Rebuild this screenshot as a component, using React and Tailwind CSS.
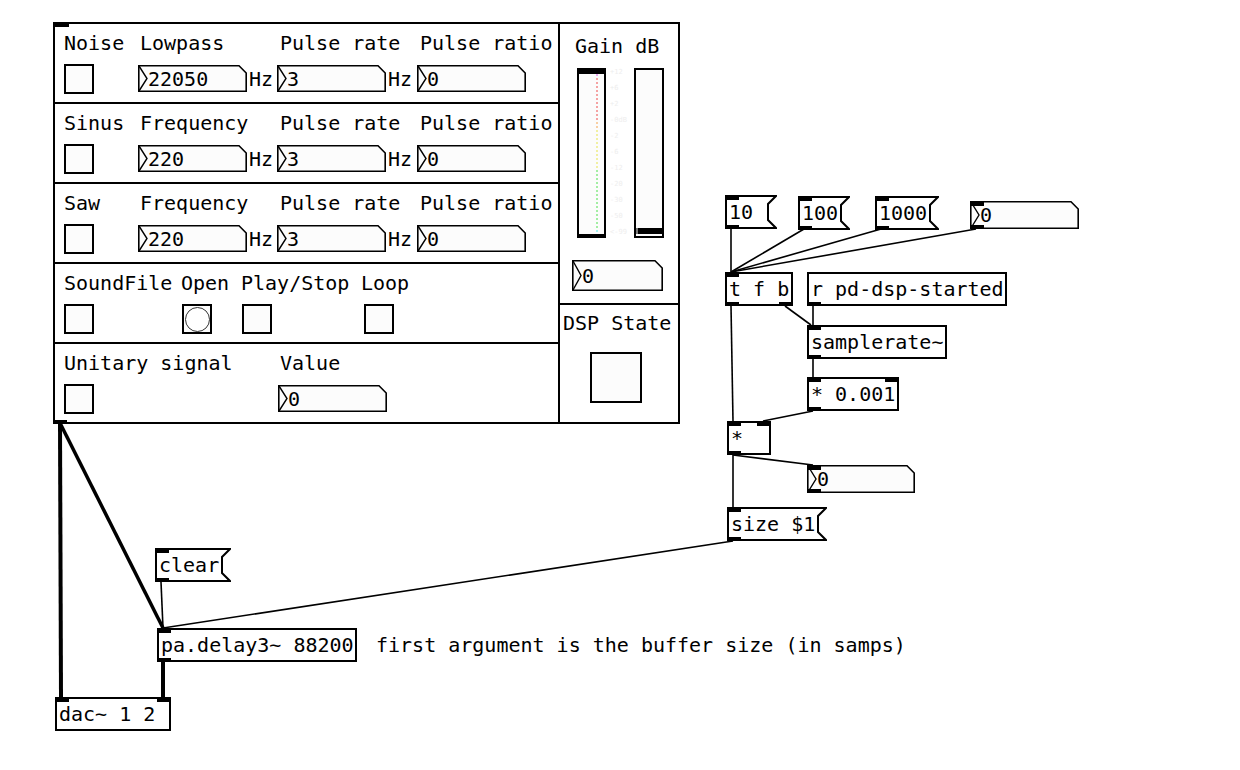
import React from "react";

// Pd-style patch canvas: nodes sit at their canvas coordinates, wires drawn in one svg.

const side = { l: "left-0", r: "right-0" };

function Ports({ ins = [], outs = [] }) {
  return (
    <>
      {ins.map((s, i) => (
        <span key={"i" + i} className={`absolute top-0 ${side[s]} h-[5px] w-[14px] bg-black`} />
      ))}
      {outs.map((s, i) => (
        <span key={"o" + i} className={`absolute bottom-0 ${side[s]} h-[4px] w-[14px] bg-black`} />
      ))}
    </>
  );
}

function Obj({ text, className, ins = [], outs = [] }) {
  return (
    <div
      className={`absolute flex h-[34px] items-center whitespace-pre bg-white pl-[4px] shadow-[inset_0_0_0_2px_#000] ${className}`}
    >
      {text}
      <Ports ins={ins} outs={outs} />
    </div>
  );
}

function Msg({ text, W, className }) {
  const H = 34;
  return (
    <div className={`absolute h-[34px] ${className}`}>
      <svg className="absolute inset-0" width={W} height={H}>
        <polygon
          points={`1,1 ${W - 1},1 ${W - 9},9 ${W - 9},${H - 9} ${W - 1},${H - 1} 1,${H - 1}`}
          fill="#fff"
          stroke="#000"
          strokeWidth="2"
        />
      </svg>
      <span className="relative flex h-full items-center whitespace-pre pl-[4px]">{text}</span>
      <Ports ins={["l"]} outs={["l"]} />
    </div>
  );
}

function NumBox({ w, h, value, className = "", ports = false }) {
  return (
    <div className={`relative shrink-0 ${className}`}>
      <svg className="absolute inset-0" width={w} height={h}>
        <polygon
          points={`0.8,0.8 ${w - 8},0.8 ${w - 0.8},8 ${w - 0.8},${h - 0.8} 0.8,${h - 0.8}`}
          fill="#fcfcfc"
          stroke="#000"
          strokeWidth="1.6"
        />
        <polyline points={`1,1 9,${h / 2} 1,${h - 1}`} fill="none" stroke="#000" strokeWidth="1.4" />
      </svg>
      <span className="relative flex h-full items-center pl-[10px]">{value}</span>
      {ports && <Ports ins={["l"]} outs={["l"]} />}
    </div>
  );
}

function Toggle({ className = "" }) {
  return <div className={`h-[30px] w-[30px] shrink-0 border-2 border-black bg-[#fcfcfc] ${className}`} />;
}

function Bang({ className = "" }) {
  return (
    <div
      className={`flex h-[30px] w-[30px] shrink-0 items-center justify-center border-2 border-black bg-[#fcfcfc] ${className}`}
    >
      <div className="h-[25px] w-[25px] rounded-full border-[1.5px] border-[#333] bg-white" />
    </div>
  );
}

function Hz() {
  return <span className="ml-[2px] mt-px flex h-[27px] w-[24px] shrink-0 items-center">Hz</span>;
}

function Row({ last, children }) {
  return (
    <div className={last ? "h-[78px] pl-[9px] pt-[9px]" : "h-[80px] border-b-2 border-black pl-[9px] pt-[9px]"}>
      {children}
    </div>
  );
}

function SynthRow({ name, param, value }) {
  return (
    <Row>
      <div className="flex whitespace-pre leading-[20px]">
        <span className="w-[76px] shrink-0">{name}</span>
        <span className="w-[140px] shrink-0">{param}</span>
        <span className="w-[140px] shrink-0">Pulse rate</span>
        <span>Pulse ratio</span>
      </div>
      <div className="mt-[11px] flex items-start">
        <Toggle />
        <NumBox className="ml-[44px] mt-px h-[27px] w-[109px]" w={109} h={27} value={value} />
        <Hz />
        <NumBox className="ml-[4px] mt-px h-[27px] w-[109px]" w={109} h={27} value="3" />
        <Hz />
        <NumBox className="ml-[5px] mt-px h-[27px] w-[109px]" w={109} h={27} value="0" />
      </div>
    </Row>
  );
}

const DOTS = [
  ...Array(1).fill("bg-[#e6a6f0]"),
  ...Array(11).fill("bg-[#f5a3a3]"),
  ...Array(2).fill("bg-[#f8cfa2]"),
  ...Array(10).fill("bg-[#f1f0a2]"),
  ...Array(15).fill("bg-[#a3eea3]"),
  ...Array(1).fill("bg-[#a3f2f2]"),
];

const SCALE = ["+12", "+6", "+2", "-0dB", "-2", "-6", "-12", "-20", "-30", "-50", "<-99"];

function GainPanel() {
  return (
    <div className="h-[281px] border-b-2 border-black">
      <div className="pl-[15px] pt-[12px] leading-[20px] whitespace-pre">Gain dB</div>
      <div className="ml-[17px] mt-[12px] flex">
        <div className="flex h-[170px] w-[29px] flex-col border-2 border-black bg-[#fcfcfc]">
          <div className="h-[4px] bg-black" />
          <div className="flex flex-col pl-[17px]">
            {DOTS.map((c, i) => (
              <span key={i} className={`mb-[2px] h-[2px] w-[2px] ${c}`} />
            ))}
          </div>
          <div className="h-[2px] bg-black" />
        </div>
        <div className="-mt-[4px] flex w-[28px] flex-col pl-[4px] text-[7px] text-[#eeeeee]">
          {SCALE.map((s) => (
            <span key={s} className="h-[16px] leading-[16px]">
              {s}
            </span>
          ))}
        </div>
        <div className="flex h-[170px] w-[30px] flex-col justify-end border-2 border-black bg-[#fcfcfc]">
          <div className="mb-[2px] flex h-[6px]">
            <span className="w-[2px] bg-[#777]" />
            <span className="flex-1 bg-black" />
          </div>
        </div>
      </div>
      <NumBox className="ml-[12px] mt-[20px] h-[31px] w-[91px]" w={91} h={31} value="0" />
    </div>
  );
}

function ControlPanel() {
  return (
    <div className="absolute left-[53px] top-[22px] flex h-[402px] w-[627px] border-2 border-black bg-white">
      <span className="absolute -left-[2px] -top-[2px] h-[5px] w-[16px] bg-black" />
      <span className="absolute -bottom-[2px] -left-[2px] h-[4px] w-[14px] bg-black" />
      <div className="flex w-[505px] shrink-0 flex-col border-r-2 border-black">
        <SynthRow name="Noise" param="Lowpass" value="22050" />
        <SynthRow name="Sinus" param="Frequency" value="220" />
        <SynthRow name="Saw" param="Frequency" value="220" />
        <Row>
          <div className="flex whitespace-pre leading-[20px]">
            <span className="w-[117px] shrink-0">SoundFile</span>
            <span className="w-[60px] shrink-0">Open</span>
            <span className="w-[120px] shrink-0">Play/Stop</span>
            <span>Loop</span>
          </div>
          <div className="mt-[11px] flex items-start">
            <Toggle />
            <Bang className="ml-[88px]" />
            <Toggle className="ml-[30px]" />
            <Toggle className="ml-[92px]" />
          </div>
        </Row>
        <Row last>
          <div className="flex whitespace-pre leading-[20px]">
            <span className="w-[216px] shrink-0">Unitary signal</span>
            <span>Value</span>
          </div>
          <div className="mt-[11px] flex items-start">
            <Toggle />
            <NumBox className="ml-[184px] mt-px h-[27px] w-[109px]" w={109} h={27} value="0" />
          </div>
        </Row>
      </div>
      <div className="flex flex-1 flex-col">
        <GainPanel />
        <div className="flex-1">
          <div className="pl-[3px] pt-[8px] leading-[20px] whitespace-pre">DSP State</div>
          <div className="ml-[30px] mt-[19px] h-[51px] w-[52px] border-2 border-black bg-[#fcfcfc]" />
        </div>
      </div>
    </div>
  );
}

const CTRL = [
  [731, 228, 731, 272],
  [804, 229, 731, 272],
  [881, 229, 731, 272],
  [976, 229, 731, 272],
  [731, 306, 733, 421],
  [785, 306, 811, 325],
  [813, 306, 813, 325],
  [813, 359, 813, 377],
  [813, 411, 763, 421],
  [733, 455, 813, 465],
  [733, 455, 733, 507],
  [733, 541, 163, 628],
  [161, 582, 163, 628],
];

const SIG = [
  [60, 423, 61, 697, 4],
  [60, 423, 163, 628, 3.5],
  [163, 662, 163, 697, 4],
];

function Wires() {
  return (
    <svg className="absolute inset-0" width="1240" height="770">
      {CTRL.map(([x1, y1, x2, y2], i) => (
        <line key={i} x1={x1} y1={y1} x2={x2} y2={y2} stroke="#000" strokeWidth="1.6" />
      ))}
      {SIG.map(([x1, y1, x2, y2, w], i) => (
        <line key={"s" + i} x1={x1} y1={y1} x2={x2} y2={y2} stroke="#000" strokeWidth={w} />
      ))}
    </svg>
  );
}

export default function App() {
  return (
    <div className="relative h-[770px] w-[1240px] overflow-hidden bg-white font-['DejaVu_Sans_Mono',monospace] text-[20px] text-black">
      <Wires />
      <ControlPanel />

      <Msg text="10" W={52} className="left-[725px] top-[195px]" />
      <Msg text="100" W={52} className="left-[798px] top-[196px]" />
      <Msg text="1000" W={64} className="left-[875px] top-[196px]" />
      <div className="absolute left-[970px] top-[201px]">
        <NumBox className="h-[28px] w-[109px]" w={109} h={28} value="0" ports />
      </div>

      <Obj text="t f b" className="left-[725px] top-[272px] w-[68px]" ins={["l"]} outs={["l", "r"]} />
      <Obj text="r pd-dsp-started" className="left-[807px] top-[272px] w-[200px]" outs={["l"]} />
      <Obj text="samplerate~" className="left-[807px] top-[325px] w-[140px]" ins={["l"]} outs={["l"]} />
      <Obj text="* 0.001" className="left-[807px] top-[377px] w-[92px]" ins={["l", "r"]} outs={["l"]} />
      <Obj text="*" className="left-[727px] top-[421px] w-[44px]" ins={["l", "r"]} outs={["l"]} />
      <div className="absolute left-[807px] top-[465px]">
        <NumBox className="h-[28px] w-[108px]" w={108} h={28} value="0" ports />
      </div>
      <Msg text="size $1" W={100} className="left-[727px] top-[507px]" />

      <Msg text="clear" W={76} className="left-[155px] top-[548px]" />
      <Obj text="pa.delay3~ 88200" className="left-[157px] top-[628px] w-[200px]" ins={["l"]} outs={["l"]} />
      <div className="absolute left-[376px] top-[628px] flex h-[34px] items-center whitespace-pre">
        first argument is the buffer size (in samps)
      </div>
      <Obj text="dac~ 1 2" className="left-[55px] top-[697px] w-[116px]" ins={["l", "r"]} />
    </div>
  );
}
